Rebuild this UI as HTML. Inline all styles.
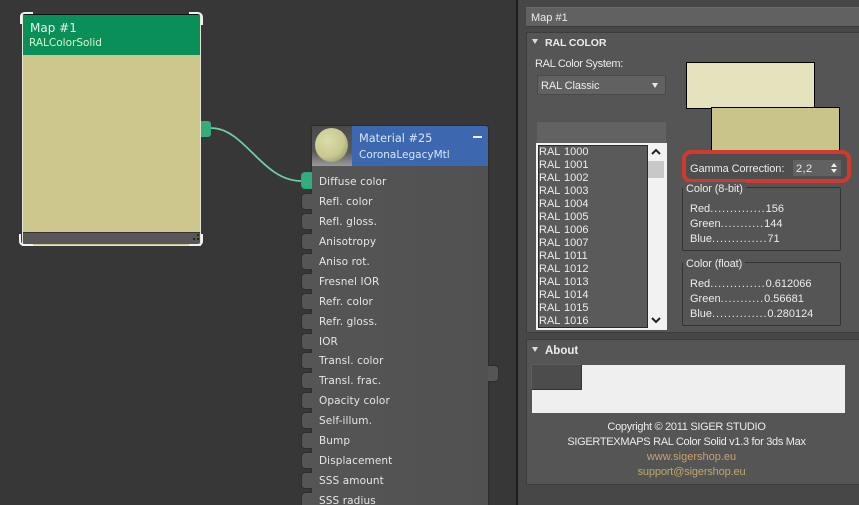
<!DOCTYPE html>
<html><head><meta charset="utf-8"><style>
html,body{margin:0;padding:0;background:#373737}
#p{position:relative;width:859px;height:505px;overflow:hidden;background:#373737;font-family:"Liberation Sans",sans-serif;font-size:11px;color:#ececec}
#p div{position:absolute;box-sizing:border-box;white-space:nowrap}
.nl{left:319px;font-family:"DejaVu Sans",sans-serif;font-size:10.5px;line-height:14px;color:#e6e6e6;letter-spacing:.1px}
.sock{left:301px;width:11px;height:17px;background:#555;border:1px solid #2e2e2e;border-right:none;border-radius:4px 0 0 4px}
.li{left:539px;line-height:13px;letter-spacing:0;word-spacing:1px}
.t{line-height:14px}
.gb{border:1px solid #333;border-radius:2px}
.leg{background:#555;padding:0 3px;line-height:14px;letter-spacing:-.1px}
.d{letter-spacing:.9px}
.c{left:526px;width:333px;padding-right:12px;text-align:center;letter-spacing:-.3px}
</style></head><body><div id="p">
<!-- left node -->
<div style="left:22px;top:14px;width:179px;height:232px;background:#cdc78e;border:1px solid #e4e4d8;border-top:1px solid #111"></div>
<div style="left:23px;top:15px;width:177px;height:40px;background:#0b8f58"></div>
<div style="left:30px;top:20px;font-family:'DejaVu Sans',sans-serif;font-size:12px;line-height:16px;color:#e6f5e6" class="t">Map #1</div>
<div style="left:29px;top:36px;font-family:'DejaVu Sans',sans-serif;font-size:10.5px;line-height:14px;color:#d8f5cf" class="t">RALColorSolid</div>
<div style="left:23px;top:232px;width:177px;height:12px;background:#575757;border-top:1px solid #333"></div>
<svg style="position:absolute;left:0;top:0" width="859" height="505" fill="none">
<path d="M21 24V17Q21 13 25 13H33M189 13H197Q202 13 202 18V25M20 234V241Q20 245 25 245H33M189 245H197Q202 245 202 241V234" stroke="#f2f2f2" stroke-width="2"/>
<path d="M211 128C245 128 262 181 301 181" stroke="#6fd0a8" stroke-width="1.7"/>
<path d="M193 238h2v2h-2zM197 238h2v2h-2zM197 234h2v2h-2z" fill="#222"/>
</svg>
<div style="left:201px;top:121px;width:10px;height:16px;background:#36ab7c;border-radius:0 3px 3px 0"></div>
<!-- material node -->
<div style="left:311px;top:125px;width:178px;height:390px;background:linear-gradient(90deg,#555,#515151);border:1px solid #2c2c2c;border-radius:3px 3px 0 0"></div>
<div style="left:312px;top:126px;width:40px;height:40px;background:linear-gradient(180deg,#4a4a4a,#5a5a5a 65%,#9a9a9a)"></div>
<div style="left:315px;top:128px;width:33px;height:34px;border-radius:50%;background:radial-gradient(circle at 38% 38%,#dcdcaa,#c8c890 55%,#77775a 100%)"></div>
<div style="left:352px;top:126px;width:136px;height:40px;background:#3d68b0;border-radius:0 3px 0 0"></div>
<div style="left:359px;top:131px;font-family:'DejaVu Sans',sans-serif;font-size:11.3px;line-height:15px;color:#d8e6f8">Material #25</div>
<div style="left:359px;top:148px;font-family:'DejaVu Sans',sans-serif;font-size:10.5px;line-height:14px;color:#d8e6f8">CoronaLegacyMtl</div>
<div style="left:473px;top:136px;width:9px;height:2px;background:#f0f4fa"></div>
<div class="sock" style="top:172px;background:#36ab7c;border-color:#2a7"></div>
<div class="sock" style="top:193px"></div><div class="sock" style="top:213px"></div><div class="sock" style="top:233px"></div>
<div class="sock" style="top:253px"></div><div class="sock" style="top:273px"></div><div class="sock" style="top:293px"></div>
<div class="sock" style="top:313px"></div><div class="sock" style="top:333px"></div><div class="sock" style="top:352px"></div>
<div class="sock" style="top:372px"></div><div class="sock" style="top:392px"></div><div class="sock" style="top:412px"></div>
<div class="sock" style="top:432px"></div><div class="sock" style="top:452px"></div><div class="sock" style="top:472px"></div>
<div class="sock" style="top:492px"></div>
<div class="nl" style="top:175px">Diffuse color</div>
<div class="nl" style="top:195px">Refl. color</div>
<div class="nl" style="top:215px">Refl. gloss.</div>
<div class="nl" style="top:235px">Anisotropy</div>
<div class="nl" style="top:255px">Aniso rot.</div>
<div class="nl" style="top:275px">Fresnel IOR</div>
<div class="nl" style="top:295px">Refr. color</div>
<div class="nl" style="top:315px">Refr. gloss.</div>
<div class="nl" style="top:335px">IOR</div>
<div class="nl" style="top:354px">Transl. color</div>
<div class="nl" style="top:374px">Transl. frac.</div>
<div class="nl" style="top:394px">Opacity color</div>
<div class="nl" style="top:414px">Self-illum.</div>
<div class="nl" style="top:434px">Bump</div>
<div class="nl" style="top:454px">Displacement</div>
<div class="nl" style="top:474px">SSS amount</div>
<div class="nl" style="top:494px">SSS radius</div>
<div style="left:488px;top:365px;width:11px;height:17px;background:#555;border:1px solid #2e2e2e;border-left:none;border-radius:0 4px 4px 0"></div>
<!-- right panel -->
<div style="left:516px;top:0;width:343px;height:505px;background:#474747;border-left:2px solid #1e1e1e"></div>
<div style="left:526px;top:7px;width:333px;height:20px;background:#616161;border-top:1px solid #6a6a6a;border-bottom:1px solid #3a3a3a"></div>
<div style="left:531px;top:11px" class="t">Map #1</div>
<div style="left:526px;top:32px;width:333px;height:301px;background:#555;border:1px solid #3c3c3c;border-right:none"></div>
<div style="left:532px;top:39px;width:0;height:0;border-left:3.5px solid transparent;border-right:3.5px solid transparent;border-top:5px solid #ddd"></div>
<div style="left:545px;top:36px;font-weight:bold;font-size:10.5px;letter-spacing:-.1px" class="t">RAL COLOR</div>
<div style="left:535px;top:57px;letter-spacing:-.3px" class="t">RAL Color System:</div>
<div style="left:537px;top:75px;width:129px;height:20px;background:#616161;border:1px solid #4a4a4a"></div>
<div style="left:541px;top:79px;letter-spacing:-.1px" class="t">RAL Classic</div>
<div style="left:652px;top:83px;width:0;height:0;border-left:3.5px solid transparent;border-right:3.5px solid transparent;border-top:5px solid #e8e8e8"></div>
<div style="left:537px;top:122px;width:129px;height:21px;background:#626262"></div>
<div style="left:536px;top:143px;width:131px;height:187px;background:#f2f2f2"></div>
<div style="left:538px;top:145px;width:110px;height:183px;background:#5a5a5a;border:1px solid #2a2a2a"></div>
<div style="left:648px;top:161px;width:16px;height:17px;background:#c8c8c8"></div>
<svg style="position:absolute;left:648px;top:145px" width="17" height="183" fill="none"><path d="M4 9L8 5L12 9" stroke="#222" stroke-width="2"/><path d="M4 173L8 177L12 173" stroke="#222" stroke-width="2"/></svg>
<div class="li" style="top:146px">RAL 1000</div><div class="li" style="top:159px">RAL 1001</div>
<div class="li" style="top:172px">RAL 1002</div><div class="li" style="top:185px">RAL 1003</div>
<div class="li" style="top:198px">RAL 1004</div><div class="li" style="top:211px">RAL 1005</div>
<div class="li" style="top:224px">RAL 1006</div><div class="li" style="top:237px">RAL 1007</div>
<div class="li" style="top:250px">RAL 1011</div><div class="li" style="top:263px">RAL 1012</div>
<div class="li" style="top:276px">RAL 1013</div><div class="li" style="top:289px">RAL 1014</div>
<div class="li" style="top:302px">RAL 1015</div><div class="li" style="top:315px">RAL 1016</div>
<div style="left:686px;top:62px;width:129px;height:47px;background:#e4e1bd;border:1px solid #000"></div>
<div style="left:711px;top:107px;width:129px;height:48px;background:#c9c48a;border:1px solid #000;border-bottom:none"></div>
<div style="left:682px;top:150px;width:169px;height:33px;background:#4e4e4e;border:4px solid #d03a2e;border-radius:9px"></div>
<div style="left:690px;top:162px;letter-spacing:-.1px" class="t">Gamma Correction:</div>
<div style="left:793px;top:160px;width:48px;height:16px;background:#616161"></div>
<div style="left:796px;top:162px;letter-spacing:.4px" class="t">2,2</div>
<svg style="position:absolute;left:830px;top:163px" width="8" height="11"><path d="M1 4L4 0L7 4zM1 6L4 10L7 6z" fill="#eee"/></svg>
<div class="gb" style="left:682px;top:187px;width:159px;height:64px"></div>
<div class="leg" style="left:683px;top:182px">Color (8-bit)</div>
<div class="t" style="left:690px;top:202px">Red<span class="d">..............</span>156</div>
<div class="t" style="left:690px;top:217px">Green<span class="d">...........</span>144</div>
<div class="t" style="left:690px;top:232px">Blue<span class="d">..............</span>71</div>
<div class="gb" style="left:682px;top:262px;width:159px;height:64px"></div>
<div class="leg" style="left:683px;top:257px">Color (float)</div>
<div class="t" style="left:690px;top:277px">Red<span class="d">..............</span>0.612066</div>
<div class="t" style="left:690px;top:292px">Green<span class="d">...........</span>0.56681</div>
<div class="t" style="left:690px;top:307px">Blue<span class="d">..............</span>0.280124</div>
<div style="left:526px;top:339px;width:333px;height:146px;background:#555;border:1px solid #3c3c3c;border-right:none"></div>
<div style="left:532px;top:347px;width:0;height:0;border-left:3.5px solid transparent;border-right:3.5px solid transparent;border-top:5px solid #ddd"></div>
<div style="left:545px;top:344px;font-weight:bold;font-size:11.5px" class="t">About</div>
<div style="left:532px;top:365px;width:313px;height:48px;background:#efefef"></div>
<div style="left:531px;top:364px;width:51px;height:26px;background:#4c4c4c;border:1px solid #5e5e5e;border-right-color:#333;border-bottom-color:#333"></div>
<div class="t c" style="top:420px">Copyright © 2011 SIGER STUDIO</div>
<div class="t c" style="top:435px">SIGERTEXMAPS RAL Color Solid v1.3 for 3ds Max</div>
<div class="t c" style="left:531px;top:450px;color:#c9a06e;letter-spacing:0">www.sigershop.eu</div>
<div class="t c" style="left:531px;top:465px;color:#bfa76a;letter-spacing:-.15px">support@sigershop.eu</div>
</div></body></html>
